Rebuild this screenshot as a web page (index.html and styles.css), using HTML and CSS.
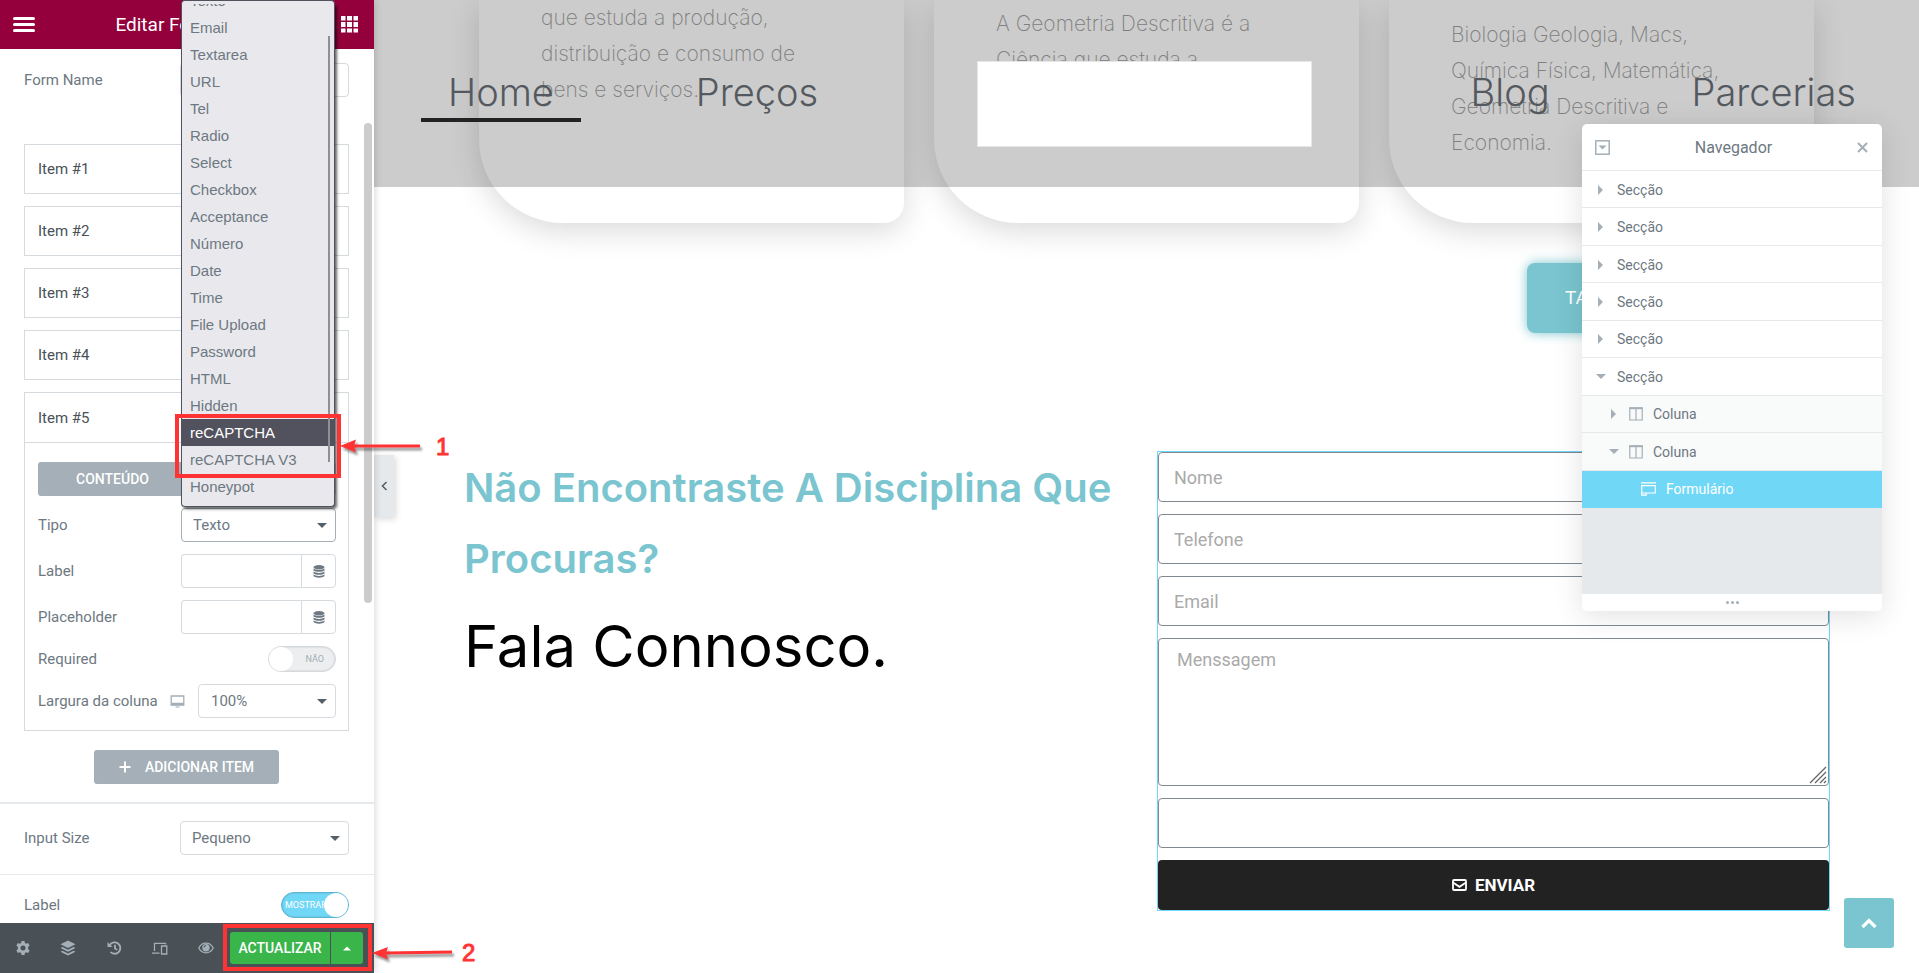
FILE: index.html
```html
<!DOCTYPE html>
<html lang="pt">
<head>
<meta charset="utf-8">
<title>Editar Formulário</title>
<link rel="stylesheet" href="styles.css">
</head>
<body>
<div class="app">
  <aside class="panel">
    <header class="panel-header">
      <button class="icon-btn" aria-label="Menu"><svg width="22" height="15" viewBox="0 0 22 15" stroke="#fff" stroke-width="3" stroke-linecap="round"><path d="M1.5 1.5h19M1.5 7.5h19M1.5 13.500h19"/></svg></button>
      <h1 class="panel-title">Editar Formulário</h1>
      <button class="icon-btn" aria-label="Widgets"><svg width="17" height="17" viewBox="0 0 17 17" fill="#fff"><path d="M0 0h4.500v4.500h-4.500zM6 0h5v4.500h-5zM12.500 0h4.500v4.500h-4.500zM0 6h4.500v5h-4.500zM6 6h5v5h-5zM12.500 6h4.500v5h-4.500zM0 12.500h4.500v4h-4.500zM6 12.500h5v4h-5zM12.500 12.500h4.500v4h-4.500z"/></svg></button>
    </header>
    <div class="panel-body">
      <div class="row name-row">
        <label for="form-name">Form Name</label>
        <input class="field wide" id="form-name" type="text">
      </div>
      <div class="items">
        <button class="item">Item #1</button>
        <button class="item">Item #2</button>
        <button class="item">Item #3</button>
        <button class="item">Item #4</button>
        <section class="item-open">
          <button class="item-head">Item #5</button>
          <div class="item-content">
            <div class="tabs">
              <button class="tab active">CONTEÚDO</button>
              <button class="tab">AVANÇADO</button>
            </div>
            <div class="row">
              <label for="tipo">Tipo</label>
              <span class="select-wrap mid"><select class="field focused" id="tipo"><option>Texto</option></select></span>
            </div>
            <div class="row">
              <label for="lbl">Label</label>
              <span class="group mid"><input class="field" id="lbl" type="text"><button class="dyn" aria-label="Tags dinâmicas"><svg width="12" height="13" viewBox="0 0 12 13" fill="#6d7882"><ellipse cx="6" cy="2.200" rx="5.500" ry="2.200"/><path d="M.5 3.600c2 1.700 9 1.700 11 0v1.900c-2 1.700-9 1.700-11 0zM.5 6.600c2 1.700 9 1.700 11 0v1.900c-2 1.700-9 1.700-11 0zM.5 9.600c2 1.700 9 1.700 11 0v1.500c-2 2.200-9 2.200-11 0z"/></svg></button></span>
            </div>
            <div class="row">
              <label for="ph">Placeholder</label>
              <span class="group mid"><input class="field" id="ph" type="text"><button class="dyn" aria-label="Tags dinâmicas"><svg width="12" height="13" viewBox="0 0 12 13" fill="#6d7882"><ellipse cx="6" cy="2.200" rx="5.500" ry="2.200"/><path d="M.5 3.600c2 1.700 9 1.700 11 0v1.900c-2 1.700-9 1.700-11 0zM.5 6.600c2 1.700 9 1.700 11 0v1.900c-2 1.700-9 1.700-11 0zM.5 9.600c2 1.700 9 1.700 11 0v1.500c-2 2.200-9 2.200-11 0z"/></svg></button></span>
            </div>
            <div class="row">
              <span>Required</span>
              <label class="switch"><input type="checkbox" aria-label="Required"><span class="knob"></span><span class="switch-text">NÃO</span></label>
            </div>
            <div class="row">
              <label for="col">Largura da coluna</label>
              <svg class="device" width="15" height="13" viewBox="0 0 15 13"><path d="M1.200 1h12.600v9H1.200z" fill="none" stroke="#a4afb7" stroke-width="1.300"/><path d="M1 7.800h13v2.400H1zM5.500 11.500h4v1h-4z" fill="#a4afb7"/></svg>
              <span class="select-wrap narrow"><select class="field pad" id="col"><option>100%</option></select></span>
            </div>
          </div>
        </section>
      </div>
      <button class="add"><svg width="12" height="12" viewBox="0 0 12 12" stroke="#fff" stroke-width="2"><path d="M6 .5v11M.5 6h11"/></svg>ADICIONAR ITEM</button>
      <div class="row size-row">
        <label for="size">Input Size</label>
        <span class="select-wrap wide"><select class="field" id="size"><option>Pequeno</option></select></span>
      </div>
      <div class="row label-row">
        <span>Label</span>
        <label class="switch on"><input type="checkbox" checked aria-label="Label"><span class="switch-text">MOSTRAR</span><span class="knob"></span></label>
      </div>
    </div>
    <footer class="panel-footer">
      <button class="tool" aria-label="Definições"><svg width="16" height="16" viewBox="0 0 16 16"><path fill="#a4afb7" fill-rule="evenodd" d="M6.500 1h3l.4 2 1.300.7 1.900-.7 1.500 2.600-1.500 1.300v2.200l1.500 1.300-1.500 2.600-1.900-.7-1.300.7-.4 2h-3l-.4-2-1.300-.7-1.900.7-1.500-2.600 1.500-1.300V6.900L1.400 5.600 2.900 3l1.900.7L6.100 3zM8 5.500a2.500 2.500 0 1 0 0 5 2.500 2.500 0 0 0 0-5z"/></svg></button>
      <button class="tool" aria-label="Navegador"><svg width="16" height="16" viewBox="0 0 16 16" fill="#a4afb7"><path d="M8 .5l7.500 3.700L8 8 .5 4.200zM.5 8l2-1L8 9.700 13.500 7l2 1L8 11.700zM.5 11.800l2-1L8 13.500l5.500-2.700 2 1L8 15.500z"/></svg></button>
      <button class="tool" aria-label="Histórico"><svg width="15" height="14" viewBox="0 0 15 14" fill="none" stroke="#a4afb7" stroke-width="1.800"><path d="M2.800 4A5.700 5.700 0 1 1 3.500 11M8 3.800v3.700l2.300 1.200"/><path fill="#a4afb7" stroke="none" d="M.5 1v5h5z"/></svg></button>
      <button class="tool" aria-label="Responsivo"><svg width="16" height="13" viewBox="0 0 16 13" fill="none" stroke="#a4afb7" stroke-width="1.300"><path d="M2.500 9V1.300h11v1.200M0 11.200h7.500M9.500 4h5.300v8H9.500z"/></svg></button>
      <button class="tool" aria-label="Pré-visualizar"><svg width="16" height="12" viewBox="0 0 16 12"><path fill="none" stroke="#a4afb7" stroke-width="1.300" d="M.8 6C4-.4 12-.4 15.200 6 12 12.400 4 12.400.8 6z"/><circle cx="8" cy="5.800" r="3.700" fill="#a4afb7"/><path d="M6 5.500a2 2 0 0 1 2-2" stroke="#495157" fill="none"/></svg></button>
      <div class="publish">
        <button class="update">ACTUALIZAR</button>
        <button class="update-more" aria-label="Opções"><svg width="8" height="5" viewBox="0 0 8 5" fill="#fff"><path d="M0 4.500L4 .5l4 4z"/></svg></button>
      </div>
    </footer>
    <div class="panel-scroll"></div>
    <ul class="type-list" role="listbox" aria-label="Tipo">
      <li role="option">Texto</li>
      <li role="option">Email</li>
      <li role="option">Textarea</li>
      <li role="option">URL</li>
      <li role="option">Tel</li>
      <li role="option">Radio</li>
      <li role="option">Select</li>
      <li role="option">Checkbox</li>
      <li role="option">Acceptance</li>
      <li role="option">Número</li>
      <li role="option">Date</li>
      <li role="option">Time</li>
      <li role="option">File Upload</li>
      <li role="option">Password</li>
      <li role="option">HTML</li>
      <li role="option">Hidden</li>
      <li role="option" class="selected" aria-selected="true">reCAPTCHA</li>
      <li role="option">reCAPTCHA V3</li>
      <li role="option">Honeypot</li>
    </ul>
    <div class="type-edge"></div>
    <div class="type-scroll"></div>
  </aside>

  <main class="preview">
    <nav class="site-nav">
      <div class="nav-group"><a class="active" href="#">Home</a><a href="#">Preços</a></div>
      <div class="logo"></div>
      <div class="nav-group"><a href="#">Blog</a><a href="#">Parcerias</a></div>
    </nav>
    <section class="cards">
      <article class="card first">que estuda a produção,<br>distribuição e consumo de<br>bens e serviços.</article>
      <article class="card second">A Geometria Descritiva é a<br>Ciência que estuda a</article>
      <article class="card third">Biologia Geologia, Macs,<br>Química Física, Matemática,<br>Geometria Descritiva e<br>Economia.</article>
    </section>
    <div class="cta-row"><a class="cta" href="#">TABELA</a></div>
    <section class="contact">
      <div class="contact-copy">
        <h2>Não Encontraste A Disciplina Que Procuras?</h2>
        <p>Fala Connosco.</p>
      </div>
      <form class="contact-form">
        <input type="text" placeholder="Nome" aria-label="Nome">
        <input type="tel" placeholder="Telefone" aria-label="Telefone">
        <input type="email" placeholder="Email" aria-label="Email">
        <div class="area"><textarea placeholder="Menssagem" aria-label="Menssagem"></textarea><svg class="grip" width="18" height="18" viewBox="0 0 18 18" stroke="#666" stroke-width="1.300"><path d="M1 17L17 1M6 17L17 6M11 17l6-6M15 17l2-2"/></svg></div>
        <input type="text" aria-label="Texto">
        <button type="button"><svg width="15" height="12" viewBox="0 0 15 12" fill="none" stroke="#fff" stroke-width="1.800"><rect x="1" y="1" width="13" height="10" rx="1"/><path d="M1 3.500l6.500 4.300L14 3.500"/></svg>ENVIAR</button>
      </form>
    </section>
    <button class="to-top" aria-label="Topo"><svg width="16" height="11" viewBox="0 0 16 11" fill="none" stroke="#fff" stroke-width="3.200"><path d="M1.500 9L8 2.600 14.500 9"/></svg></button>
    <button class="collapse" aria-label="Ocultar painel"><svg width="7" height="10" viewBox="0 0 7 10" fill="none" stroke="#556068" stroke-width="1.600"><path d="M5.500 1L1.500 5l4 4"/></svg></button>
  </main>
</div>

<section class="navigator">
  <header class="navigator-head">
    <button class="icon-btn" aria-label="Expandir"><svg width="15" height="15" viewBox="0 0 15 15"><rect x=".8" y=".8" width="13.400" height="13.400" fill="none" stroke="#a4afb7" stroke-width="1.500"/><path fill="#a4afb7" d="M3.500 5.500h8l-4 4z"/></svg></button>
    <h2>Navegador</h2>
    <button class="icon-btn" aria-label="Fechar"><svg width="11" height="11" viewBox="0 0 11 11" stroke="#a4afb7" stroke-width="2"><path d="M1 1l9 9M10 1l-9 9"/></svg></button>
  </header>
  <ul class="tree">
    <li><span class="arrow"></span>Secção</li>
    <li><span class="arrow"></span>Secção</li>
    <li><span class="arrow"></span>Secção</li>
    <li><span class="arrow"></span>Secção</li>
    <li><span class="arrow"></span>Secção</li>
    <li><span class="arrow down"></span>Secção</li>
    <li class="col"><span class="arrow"></span><svg width="14" height="14" viewBox="0 0 14 14" fill="none" stroke="#a4afb7"><path stroke-width="1.200" d="M.8 1h12.400v12H.8zM7 2v11"/><path stroke-width="2" d="M.2 1.200h13.600"/></svg>Coluna</li>
    <li class="col"><span class="arrow down"></span><svg width="14" height="14" viewBox="0 0 14 14" fill="none" stroke="#a4afb7"><path stroke-width="1.200" d="M.8 1h12.400v12H.8zM7 2v11"/><path stroke-width="2" d="M.2 1.200h13.600"/></svg>Coluna</li>
    <li class="widget"><svg width="15" height="14" viewBox="0 0 15 14" fill="none" stroke="#fff" stroke-width="1.200"><path d="M0 .8h15M5.500 11H14.300V3.600H.7v9.600h4.500v-2.200H.7"/></svg>Formulário</li>
  </ul>
  <div class="navigator-space"></div>
  <footer class="navigator-foot"><svg width="13" height="3" viewBox="0 0 13 3" fill="#a4afb7"><circle cx="1.500" cy="1.500" r="1.500"/><circle cx="6.500" cy="1.500" r="1.500"/><circle cx="11.500" cy="1.500" r="1.500"/></svg></footer>
</section>

<div class="mark mark-one"></div>
<div class="mark mark-two"></div>
<div class="pointer pointer-one"><svg width="84" height="18" viewBox="0 0 84 18"><path fill="#f33" d="M0 8L16 1.500 14.500 6.500H80v3H14.500l1.500 5z"/></svg><span>1</span></div>
<div class="pointer pointer-two"><svg width="84" height="18" viewBox="0 0 84 18"><path fill="#f33" d="M0 9L16 3 14.500 7.500 80 6.500v3l-65.500 1L16 15.500z"/></svg><span>2</span></div>
</body>
</html>
```
FILE: styles.css
```css
* { box-sizing: border-box; }
body {
  margin: 0;
  font-family: Roboto, "Liberation Sans", sans-serif;
  font-size: 15px;
  color: #6d7882;
  background: #fff;
}
button, input, select, textarea { font: inherit; color: inherit; margin: 0; }
button { border: 0; background: none; padding: 0; cursor: pointer; }
svg { display: block; flex: none; }
h1, h2, p, ul { margin: 0; padding: 0; font-weight: 400; }
ul { list-style: none; }

.app { display: flex; height: 100vh; overflow: hidden; }

/* Editor panel */
.panel {
  position: relative;
  z-index: 2;
  flex: 0 0 374px;
  display: flex;
  flex-direction: column;
  background: #fff;
  box-shadow: 0 0 8px rgba(0, 0, 0, .2);
}
.panel-header {
  display: flex;
  align-items: center;
  justify-content: space-between;
  height: 49px;
  padding: 0 16px 0 13px;
  background: #93003c;
  color: #fff;
}
.panel-title { font-size: 19px; }
.panel-body { flex: 1; overflow: hidden; padding-top: 14px; }
.row { display: flex; align-items: center; justify-content: space-between; }
.name-row { padding: 0 25px 0 24px; }
.field {
  width: 100%;
  height: 34px;
  padding: 0 11px;
  border: 1px solid #d5dadf;
  border-radius: 4px;
  background: #fff;
  outline: 0;
  appearance: none;
}
.field.focused { border-color: #a4afb7; }
.field.pad { padding-left: 12px; }
.field.wide, .wide { width: 169px; }
.mid { width: 155px; }
.narrow { width: 138px; }
.select-wrap { position: relative; }
.select-wrap::after {
  content: "";
  position: absolute;
  right: 9px;
  top: 15px;
  border: 5px solid transparent;
  border-top-color: #556068;
  border-bottom: 0;
}
.items { display: grid; gap: 12px; padding: 47px 25px 0 24px; }
.item, .item-head { height: 50px; padding: 0 13px; text-align: left; color: #495157; }
.item { border: 1px solid #d5dadf; }
.item-open { border: 1px solid #d5dadf; }
.item-head { display: block; width: 100%; height: 50px; border-bottom: 1px solid #d5dadf; }
.item-content { display: grid; gap: 12px; padding: 19px 12px 12px 13px; }
.tabs { display: grid; grid-template-columns: 1fr 1fr; height: 34px; border-radius: 3px; overflow: hidden; color: #fff; font-size: 14px; font-weight: 500; }
.tab { background: #d5dadf; font-size: 14px; }
.tab.active { background: #a4afb7; }
.group { display: flex; }
.group .field { flex: 1; width: 0; border-radius: 4px 0 0 4px; border-right: 0; }
.dyn { display: grid; place-items: center; width: 35px; border: 1px solid #d5dadf; border-radius: 0 4px 4px 0; }
.device { margin: 0 -6px 0 -6px; }
.switch {
  position: relative;
  display: flex;
  align-items: center;
  justify-content: space-between;
  width: 68px;
  height: 26px;
  padding-right: 11px;
  border: 1px solid #d5dadf;
  border-radius: 13px;
  background: #eceeef;
  box-shadow: inset 0 0 2px rgba(0, 0, 0, .2);
  color: #a4afb7;
  font-size: 9px;
}
.switch input { position: absolute; inset: 0; opacity: 0; }
.knob { width: 24px; height: 24px; border-radius: 50%; background: #fff; }
.switch.on { justify-content: flex-end; padding: 0; background: #71d7f7; border-color: #5cb4d0; color: #fff; }
.switch.on .switch-text { flex: 1; width: 0; padding-left: 3px; overflow: hidden; }
.add {
  display: flex;
  align-items: center;
  justify-content: center;
  gap: 14px;
  width: 185px;
  height: 34px;
  margin: 19px auto 18px 94px;
  border-radius: 3px;
  background: #a4afb7;
  color: #fff;
  font-size: 14px;
  font-weight: 500;
}
.size-row { padding: 17px 25px 19px 24px; border-top: 2px solid #e6e9ec; border-bottom: 1px solid #e6e9ec; }
.label-row { padding: 17px 25px 0 24px; }
.panel-footer { display: flex; align-items: center; height: 50px; padding-right: 11px; background: #495157; }
.tool { display: grid; place-items: center; width: 46px; height: 50px; }
.tool:first-child { width: 45px; }
.publish { display: flex; gap: 1px; height: 32px; margin-left: auto; color: #fff; }
.update { width: 100px; border-radius: 3px 0 0 3px; background: #39b54a; font-size: 14px; font-weight: 500; }
.update-more { display: grid; place-items: center; width: 32px; border-radius: 0 3px 3px 0; background: #39b54a; }
.panel-scroll { position: absolute; top: 123px; right: 2px; width: 8px; height: 480px; border-radius: 4px; background: #ccc; }

/* Open list of field types */
.type-list {
  position: absolute;
  top: 4px;
  left: 181px;
  width: 154px;
  height: 503px;
  display: flex;
  flex-direction: column;
  justify-content: flex-end;
  padding-bottom: 6px;
  overflow: hidden;
  border: 1px solid #52525e;
  border-top: 0;
  border-radius: 0 0 4px 4px;
  background: #e9e9ed;
  box-shadow: 2px 2px 3px rgba(0, 0, 0, .6);
  font-family: "Liberation Sans", Arial, sans-serif;
}
.type-list li { flex: none; height: 27px; padding-left: 8px; line-height: 27px; }
.type-list .selected { background: #52525e; color: #fff; }
.type-edge { position: absolute; top: 0; left: 181px; width: 154px; height: 4px; border: 1px solid #52525e; border-bottom: 0; border-radius: 4px 4px 0 0; background: #e9e9ed; }
.type-scroll { position: absolute; top: 36px; left: 328px; width: 2px; height: 426px; background: #909094; }

/* Site preview */
.preview { position: relative; flex: 1; min-width: 0; overflow: hidden; }
.site-nav {
  position: absolute;
  inset: 0 0 auto;
  display: flex;
  justify-content: space-between;
  align-items: flex-start;
  height: 187px;
  padding: 61px 36px 0 47px;
  background: rgba(0, 0, 0, .2);
}
.nav-group { display: flex; gap: 88px; }
.nav-group a {
  height: 61px;
  padding: 0 27px;
  border-bottom: 4px solid transparent;
  font: 300 38px/62px Inter, "Open Sans", sans-serif;
  color: #54595f;
  text-decoration: none;
}
.nav-group .active { border-color: #222; }
.logo { width: 335px; height: 86px; border: 1px solid #e6e6e6; background: #fff; }
.cards { display: grid; grid-template-columns: repeat(3, 1fr); gap: 30px; padding: 0 105px; }
.card {
  padding: 0 20px 62px 62px;
  border-radius: 0 0 20px 84px;
  background: #fff;
  box-shadow: 0 8px 30px rgba(0, 0, 0, .15);
  font: 200 21px/36px Inter, "Open Sans", sans-serif;
  color: #a0a0a0;
}
.second { padding-top: 6px; }
.third { padding-top: 17px; }
.cta-row { display: flex; justify-content: flex-end; padding: 40px 105px 0; }
.cta {
  width: 287px;
  height: 70px;
  padding-left: 38px;
  border-radius: 8px;
  background: #7ac5cf;
  box-shadow: 0 0 12px #7ac5cf;
  font-size: 19px;
  line-height: 70px;
  color: #fff;
  text-decoration: none;
}
.contact { display: grid; grid-template-columns: 1fr 1fr; gap: 20px; padding: 118px 89px 0 90px; }
.contact-copy { padding-top: 1px; font-family: Inter, "Open Sans", sans-serif; }
.contact-copy h2 { font-size: 40px; font-weight: 600; line-height: 71px; color: #7ac5cf; }
.contact-copy p { margin-top: 17px; font-size: 58px; line-height: 70px; color: #000; }
.contact-form { display: grid; gap: 12px; border: 1px solid #71d7f7; font-size: 18px; }
.contact-form input, .contact-form textarea {
  display: block;
  width: 100%;
  height: 50px;
  padding: 0 15px;
  border: 1px solid #818a91;
  border-radius: 4px;
  background: #fff;
  resize: none;
}
.contact-form textarea { height: 148px; padding: 10px 18px; }
.contact-form ::placeholder { color: #aaa; opacity: 1; }
.area { position: relative; }
.grip { position: absolute; right: 2px; bottom: 2px; }
.contact-form button {
  display: flex;
  align-items: center;
  justify-content: center;
  gap: 8px;
  height: 50px;
  border-radius: 4px;
  background: #222;
  color: #fff;
  font-size: 17px;
  font-weight: 700;
}
.to-top { position: absolute; right: 25px; bottom: 25px; display: grid; place-items: center; width: 50px; height: 50px; border-radius: 3px; background: #7ac5cf; }
.collapse { position: absolute; left: 0; top: 455px; display: grid; place-items: center; width: 20px; height: 62px; background: #e6e9ec; box-shadow: 2px 2px 6px rgba(0, 0, 0, .15); }

/* Navigator window */
.navigator {
  position: absolute;
  z-index: 3;
  top: 124px;
  right: 37px;
  width: 300px;
  border-radius: 5px;
  overflow: hidden;
  background: #fff;
  box-shadow: 0 5px 30px rgba(0, 0, 0, .12);
}
.navigator-head { display: flex; align-items: center; justify-content: space-between; height: 47px; padding: 0 14px 0 13px; border-bottom: 1px solid #e6e9ec; }
.navigator-head h2 { font-size: 16px; }
.tree { display: grid; grid-auto-rows: 1fr; height: 337px; font-size: 14px; }
.tree li { display: flex; align-items: center; padding: 1px 0 0 15px; border-bottom: 1px solid #e6e9ec; }
.arrow { width: 20px; }
.arrow::before { content: ""; display: block; width: 0; border: 5px solid transparent; border-left-color: #a4afb7; border-right: 0; margin-left: 1px; }
.arrow.down::before { border-width: 5px 5px 0; border-color: #a4afb7 transparent; border-right: 5px solid transparent; margin-left: -1px; }
.tree .col { padding-left: 28px; background: #f9fafa; }
.tree .col svg { margin: 0 10px 0 -1px; }
.tree .widget { padding-left: 59px; gap: 10px; border-color: #71d7f7; background: #71d7f7; color: #fff; }
.navigator-space { height: 86px; background: #e6e9ec; }
.navigator-foot { display: grid; place-items: center; height: 17px; }

/* Annotations */
.mark { position: absolute; z-index: 4; border: 4px solid #f33; }
.mark-one { left: 175px; top: 414px; width: 166px; height: 64px; }
.mark-two { left: 223px; top: 924px; width: 149px; height: 47px; }
.pointer { position: absolute; z-index: 4; display: flex; align-items: center; font: 24px/24px "Liberation Sans", Arial, sans-serif; color: #f33; -webkit-text-stroke: 1px #f33; }
.pointer svg { filter: drop-shadow(2px 3px 1px rgba(0, 0, 0, .4)); }
.pointer-one { left: 340px; top: 435px; gap: 12px; }
.pointer-two { left: 372px; top: 941px; gap: 6px; }
```
